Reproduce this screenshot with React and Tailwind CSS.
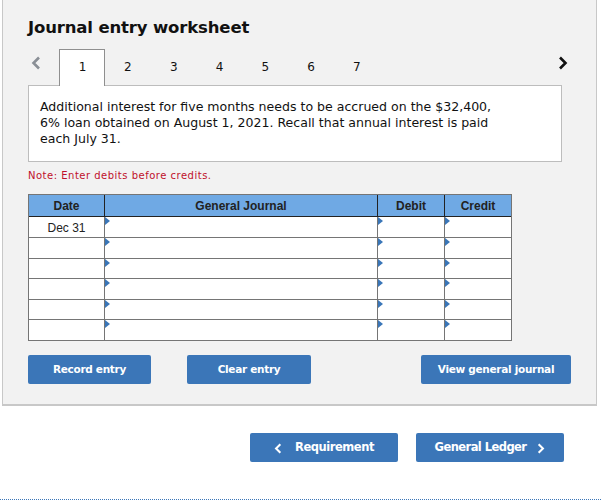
import React from "react";

const verdana = "font-['DejaVu_Sans',Verdana,sans-serif]";
const arial = "font-['Liberation_Sans',Arial,sans-serif]";

function Chevron({ dir = "right", className = "" }) {
  return (
    <svg width="10" height="14" viewBox="0 0 10 14" className={`shrink-0 ${className}`} fill="none" stroke="currentColor" strokeWidth="2.6">
      <path d={dir === "right" ? "M2 1.5 L7.5 7 L2 12.5" : "M8 1.5 L2.5 7 L8 12.5"} />
    </svg>
  );
}

function Marker() {
  return <span className="absolute left-0 top-0 h-0 w-0 border-y-[4px] border-l-[5px] border-y-transparent border-l-[#3a76b8]" />;
}

function Row({ date, h, last }) {
  const b = last ? "" : "border-b border-[#757575]";
  return (
    <div className={`flex ${h} ${b}`}>
      <div className={`flex w-[76px] items-center justify-center border-r border-[#757575] pt-px text-[12px] text-[#222] ${arial}`}>{date}</div>
      <div className="relative w-[273px] border-r border-[#757575]"><Marker /></div>
      <div className="relative w-[67px] border-r border-[#757575]"><Marker /></div>
      <div className="relative w-[66px]"><Marker /></div>
    </div>
  );
}

function Btn({ className, children }) {
  return (
    <button className={`flex h-[29px] items-center justify-center rounded-[2px] bg-[#3b76b8] pt-px font-bold text-white ${verdana} ${className}`}>
      {children}
    </button>
  );
}

export default function App() {
  const tabs = [2, 3, 4, 5, 6, 7];
  const small = "text-[10.5px] tracking-[-0.3px]";
  return (
    <div className="h-[500px] w-[601px] overflow-hidden border-b border-dotted border-[#3b76b8] bg-white">
      <div className="ml-[2px] h-[406px] w-[595px] border-x border-b-2 border-[#c8c8c8] bg-[#f2f2f2] pl-[25px] pt-[17px]">
        <h1 className={`h-[21px] text-[16.5px] font-bold leading-[21px] tracking-[-0.15px] text-[#111] ${verdana}`}>Journal entry worksheet</h1>

        <div className="mt-[11px] flex h-[37px] w-[545px] items-start">
          <Chevron dir="left" className="ml-[3px] mt-[7px] text-[#8a8f96]" />
          <div className={`relative z-10 ml-[18px] flex h-[37px] w-[46px] shrink-0 items-center justify-center border-x border-t border-[#8f8f8f] bg-white pb-[2px] pl-px text-[12px] text-[#111] ${verdana}`}>
            1
          </div>
          {tabs.map((t) => (
            <div key={t} className={`flex h-[35px] w-[45.8px] shrink-0 items-center justify-center text-[12px] text-[#111] ${verdana}`}>
              {t}
            </div>
          ))}
          <Chevron dir="right" className="ml-[178px] mt-[7px] text-[#111]" />
        </div>

        <div className={`-mt-px h-[77px] w-[534px] border border-[#bdbdbd] bg-white pl-[11px] pt-[13px] text-[12.55px] leading-[16px] text-[#111] ${verdana}`}>
          Additional interest for five months needs to be accrued on the $32,400,<br />
          6% loan obtained on August 1, 2021. Recall that annual interest is paid<br />
          each July 31.
        </div>

        <p className={`mt-[7px] h-[13px] text-[10px] leading-[13px] tracking-[0.5px] text-[#c0102a] ${verdana}`}>Note: Enter debits before credits.</p>

        <div className="mt-[12px] w-[484px] border border-[#757575] bg-white">
          <div className={`flex h-[22px] border-b border-[#222] bg-[#6fa9e4] text-[12px] font-bold text-[#222] ${arial}`}>
            <div className="flex w-[76px] items-center justify-center border-r border-[#222]">Date</div>
            <div className="flex w-[273px] items-center justify-center border-r border-[#222]">General Journal</div>
            <div className="flex w-[67px] items-center justify-center border-r border-[#222]">Debit</div>
            <div className="flex w-[66px] items-center justify-center">Credit</div>
          </div>
          <Row date="Dec 31" h="h-[21px]" />
          <Row h="h-[21px]" />
          <Row h="h-[20px]" />
          <Row h="h-[21px]" />
          <Row h="h-[20px]" />
          <Row h="h-[20px]" last />
        </div>

        <div className="mt-[14px] flex w-[543px]">
          <Btn className={`w-[123px] ${small}`}>Record entry</Btn>
          <Btn className={`ml-[36px] w-[124px] ${small}`}>Clear entry</Btn>
          <Btn className={`ml-[110px] w-[150px] ${small}`}>View general journal</Btn>
        </div>
      </div>

      <div className="mt-[27px] flex justify-end pr-[37px]">
        <Btn className="w-[148px] gap-[13px] pt-[2px] text-[11.5px] tracking-[-0.45px]">
          <Chevron dir="left" className="h-[11px] w-[8px]" />
          Requirement
        </Btn>
        <Btn className="ml-[18px] w-[148px] gap-[11px] pt-[2px] text-[11.5px] tracking-[-0.55px]">
          General Ledger
          <Chevron dir="right" className="h-[11px] w-[8px]" />
        </Btn>
      </div>
    </div>
  );
}
